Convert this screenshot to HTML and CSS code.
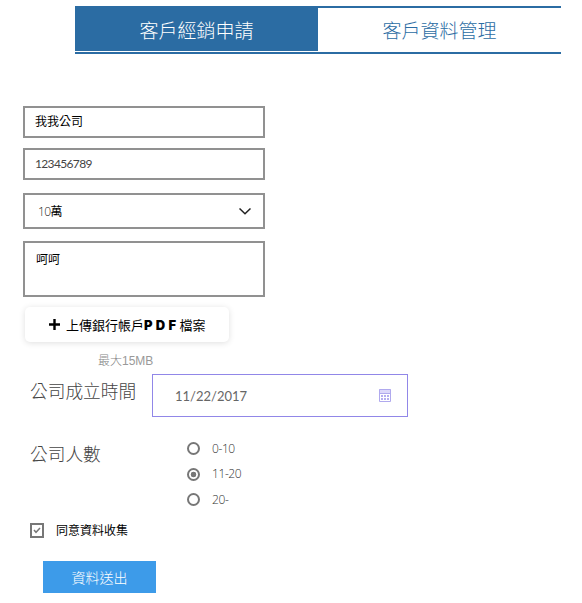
FILE: index.html
```html
<!DOCTYPE html>
<html lang="zh-Hant">
<head>
<meta charset="utf-8">
<title>客戶經銷申請</title>
<link rel="stylesheet" href="styles.css">
</head>
<body>
<nav class="tabs">
  <a class="tab tab-active"><span>客戶經銷申請</span></a>
  <a class="tab"><span>客戶資料管理</span></a>
</nav>
<main class="form">
  <div class="field company">我我公司</div>
  <div class="field number"><span>123456789</span></div>
  <div class="field select">
    <span class="amount"><span class="digits">10</span>萬</span>
    <svg width="12" height="7" viewBox="0 0 12 7"><path d="M.5 .5L6 5.8 11.5 .5" fill="none" stroke="#222" stroke-width="1.5"/></svg>
  </div>
  <div class="field note">呵呵</div>
  <div class="upload">
    <svg width="11" height="11" viewBox="0 0 11 11"><path d="M5.5 0v11M0 5.5h11" stroke="#000" stroke-width="2.4"/></svg>
    <span class="upload-text">上傳銀行帳戶<b>PDF</b>檔案</span>
  </div>
  <div class="hint">最大<span>15MB</span></div>
  <div class="row date-row">
    <div class="label">公司成立時間</div>
    <div class="date">
      <span>11/22/2017</span>
      <svg width="12" height="13" viewBox="0 0 12 13"><path d="M0 0h12v4H0z" fill="#dcd8fa"/><path d="M.5.5h11v12H.5zM0 4.5h12" fill="none" stroke="#b0a9ee"/><path d="M2 6h2v2H2zM5 6h2v2H5zM8 6h2v2H8zM2 9h2v2H2zM5 9h2v2H5zM8 9h2v2H8z" fill="#b5aef0"/></svg>
    </div>
  </div>
  <div class="row people-row">
    <div class="label">公司人數</div>
    <div class="radios">
      <div class="radio"><i class="dot"></i><span>0-10</span></div>
      <div class="radio"><i class="dot checked"></i><span>11-20</span></div>
      <div class="radio"><i class="dot"></i><span>20-</span></div>
    </div>
  </div>
  <div class="agree">
    <span class="box"><svg width="8" height="7" viewBox="0 0 8 7"><path d="M1 3l2 2.3L7 1" fill="none" stroke="#777" stroke-width="1.5"/></svg></span>
    <span>同意資料收集</span>
  </div>
  <div class="submit"><span>資料送出</span></div>
</main>
</body>
</html>
```
FILE: styles.css
```css
* { box-sizing: border-box; }
body {
  margin: 0;
  background: #fff;
  color: #000;
  font: 12px/16px "Noto Sans CJK TC", sans-serif;
  overflow: hidden;
}
svg { display: block; flex: none; }
.tabs {
  display: flex;
  width: 486px;
  height: 48px;
  margin: 6px 0 0 75px;
  border-top: 2px solid #2b6ca3;
  border-bottom: 2px solid #2b6ca3;
}
.tab {
  width: 243px;
  height: 43px;
  padding-top: 8px;
  text-align: center;
  font-size: 19px;
  line-height: 28px;
  font-weight: 300;
  color: #2b6ca3;
}
.tab-active { background: #2b6ca3; color: #fff; }
.form { padding: 52px 0 0 23px; }
.field {
  width: 242px;
  height: 32px;
  border: 2px solid #919191;
  padding: 5px 10px;
}
.number {
  margin-top: 10px;
  padding-top: 6px;
  color: #444;
  font-family: Lato, sans-serif;
  letter-spacing: -.65px;
}
.select {
  display: flex;
  align-items: center;
  justify-content: space-between;
  height: 36px;
  margin-top: 13px;
  padding: 0 12px 0 13px;
}
.digits {
  font-family: "Open Sans", sans-serif;
  font-weight: 300;
  letter-spacing: -.6px;
  color: #222;
}
.note { height: 56px; margin-top: 12px; padding: 8px 11px; }
.upload {
  display: flex;
  align-items: center;
  width: 204px;
  height: 35px;
  margin: 10px 0 0 2px;
  padding-left: 24px;
  gap: 6px;
  border-radius: 5px;
  box-shadow: 0 1px 6px rgba(0, 0, 0, .13);
}
.upload-text { padding-top: 1px; font-size: 13px; line-height: 20px; white-space: nowrap; }
.upload-text b { font-family: Inter, sans-serif; font-size: 13px; font-weight: 900; letter-spacing: 3.3px; }
.hint { height: 16px; margin: 10px 0 0 75px; color: #858585; font-weight: 300; }
.hint span { font-family: "Liberation Sans", Arial, sans-serif; font-size: 12px; color: #999; }
.row { display: flex; }
.label {
  padding-left: 7px;
  font-size: 17.7px;
  line-height: 26px;
  font-weight: 300;
  color: #444;
  white-space: nowrap;
}
.date-row { margin-top: 6px; height: 43px; }
.date-row .label { width: 129px; padding-top: 3px; }
.date {
  display: flex;
  align-items: center;
  justify-content: space-between;
  width: 256px;
  height: 43px;
  padding: 0 16px 0 22px;
  border: 1px solid #9187e8;
  color: #666;
  font-family: Lato, sans-serif;
  font-size: 13px;
}
.people-row { margin-top: 19px; height: 77px; }
.people-row .label { width: 164px; padding-top: 4px; }
.radio {
  display: flex;
  align-items: center;
  gap: 12px;
  height: 25.6px;
  color: #333;
  font-family: "Open Sans", sans-serif;
  font-weight: 300;
  letter-spacing: -.4px;
}
.dot {
  width: 13px;
  height: 13px;
  border: 2px solid #777;
  border-radius: 50%;
}
.checked { background: radial-gradient(circle, #777 0 2.6px, transparent 3.1px); }
.agree { display: flex; align-items: center; gap: 12px; height: 16px; margin: 9px 0 0 7px; }
.box {
  display: flex;
  align-items: center;
  justify-content: center;
  width: 14px;
  height: 15px;
  border: 2px solid #777;
}
.submit {
  width: 113px;
  height: 32px;
  margin: 23px 0 0 20px;
  background: #3d9be9;
  color: #fff;
  text-align: center;
  font-size: 14px;
  line-height: 32px;
  font-weight: 300;
}
```
